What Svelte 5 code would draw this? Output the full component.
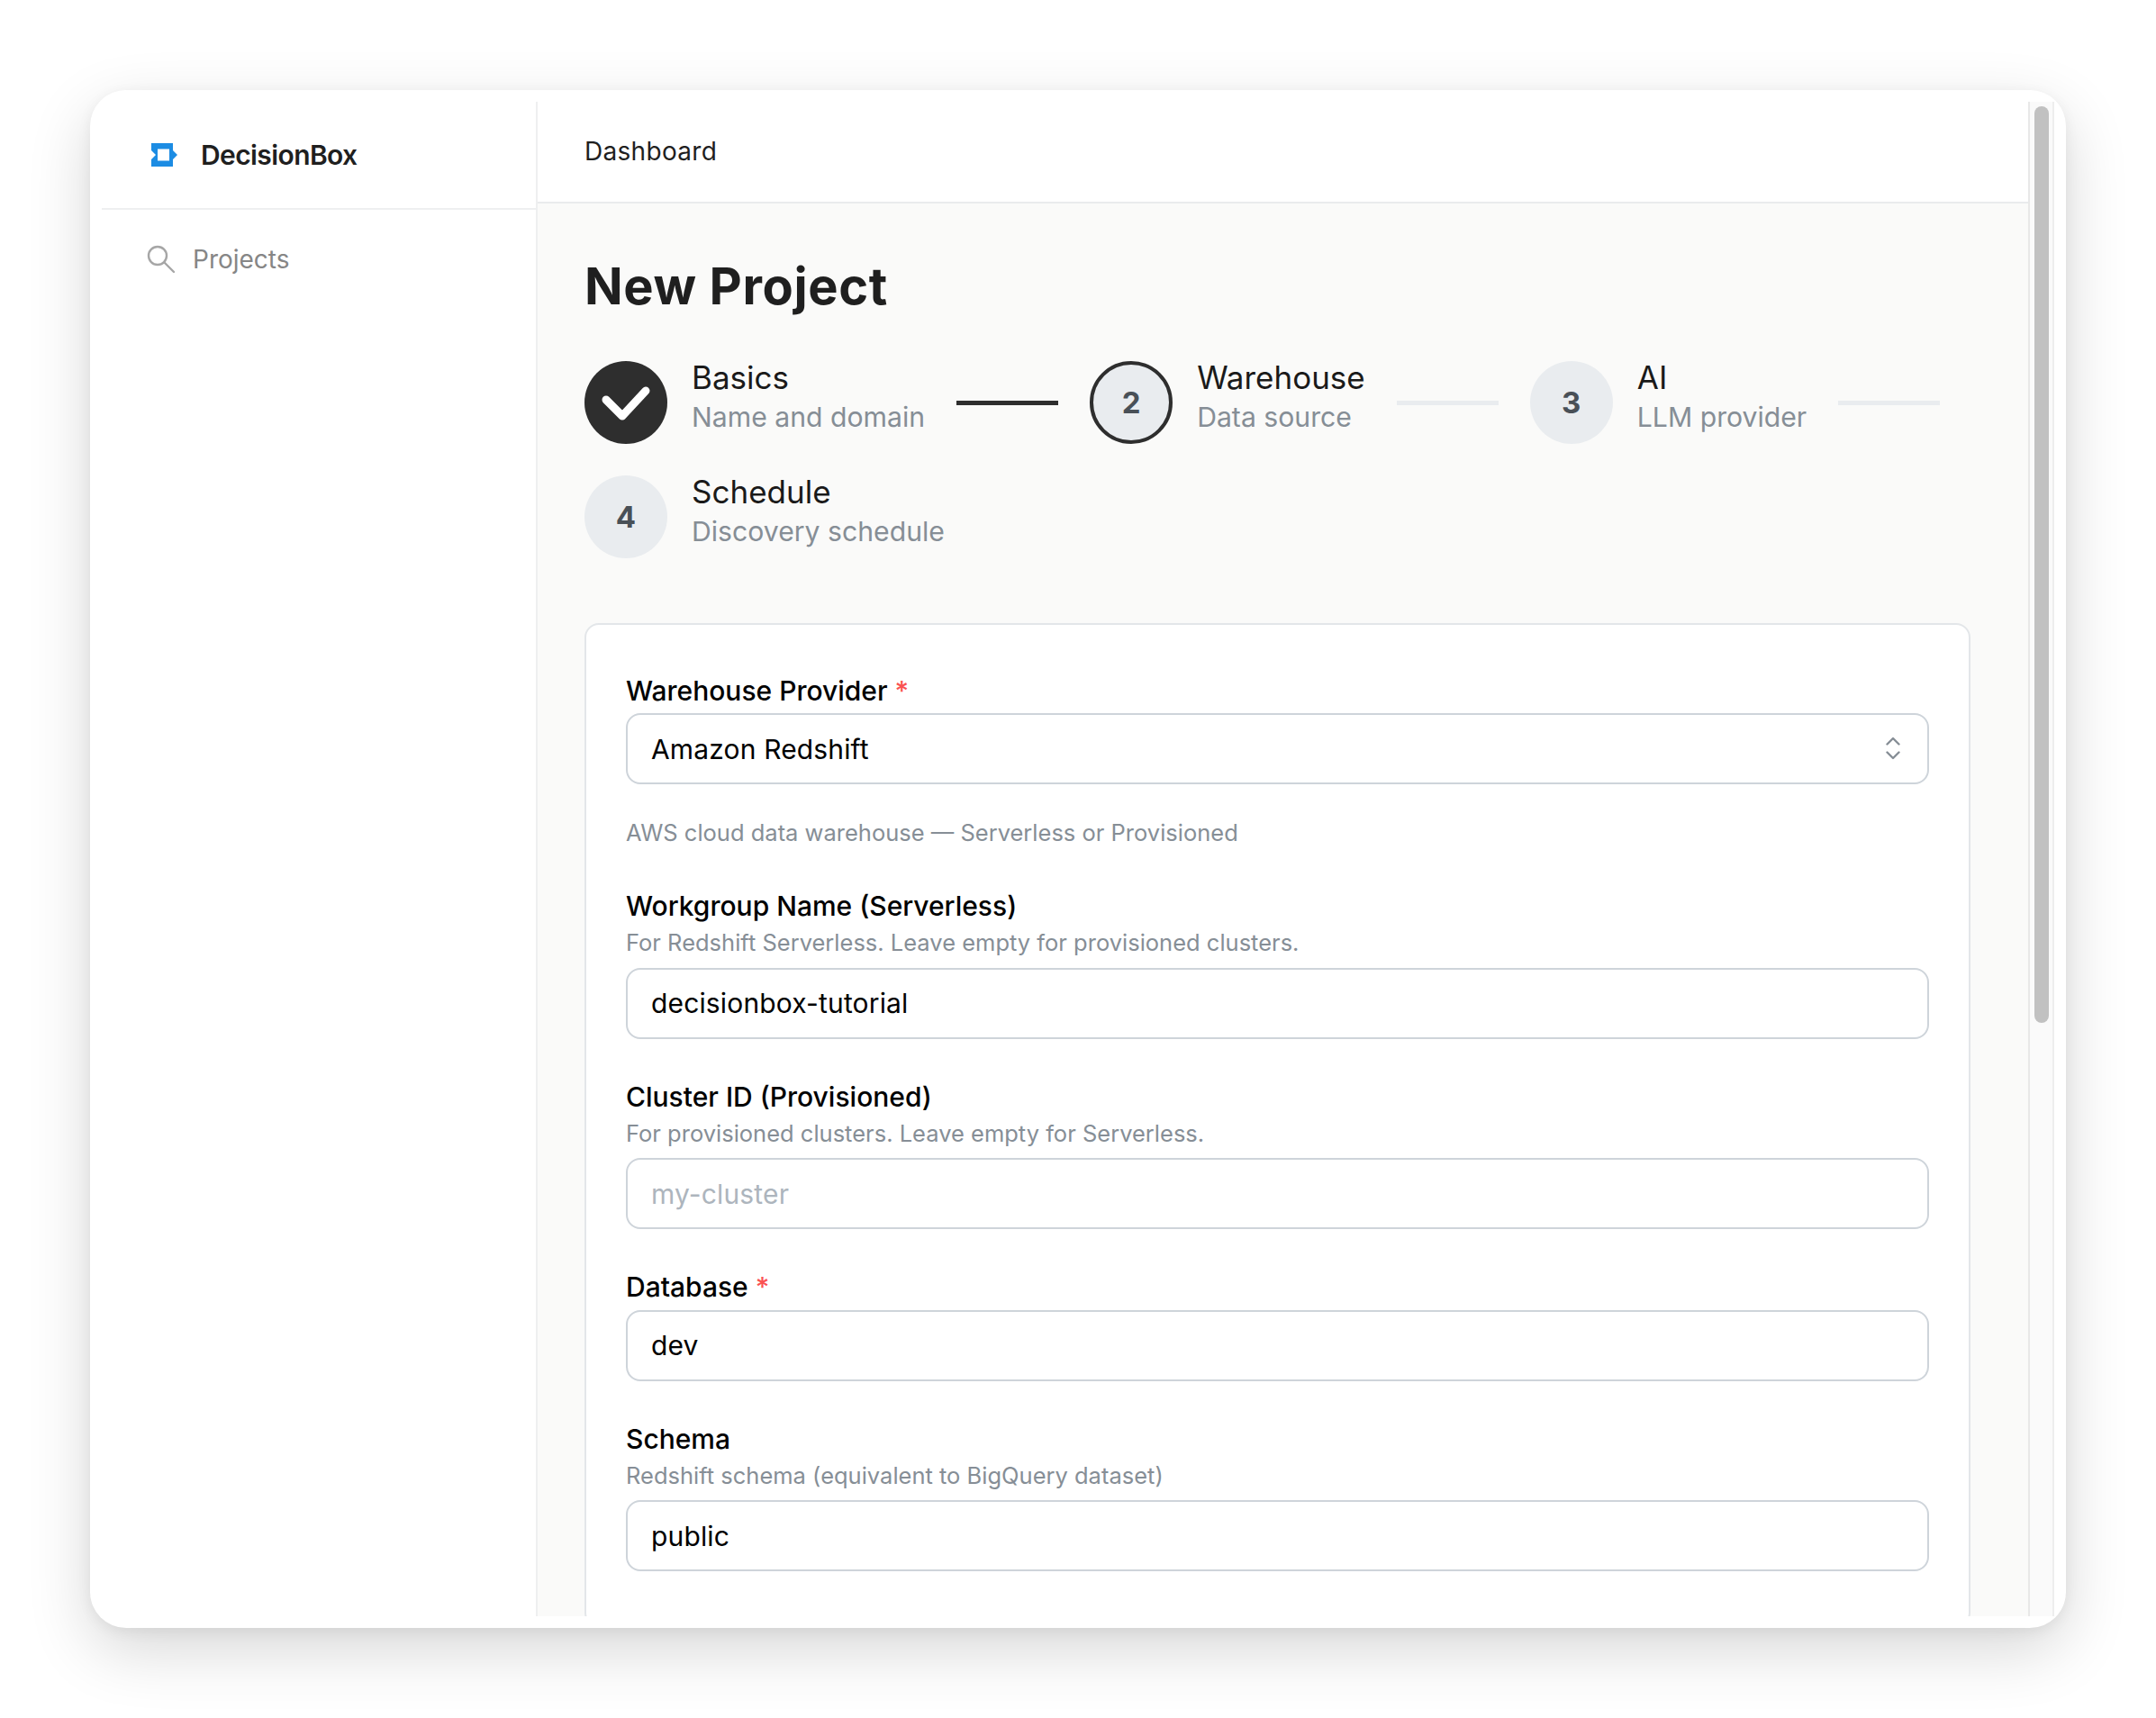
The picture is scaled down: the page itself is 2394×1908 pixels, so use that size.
<script lang="ts">
  type Step = { n: number; title: string; sub: string; state: "done" | "active" | "todo" };

  const steps: Step[] = [
    { n: 1, title: "Basics", sub: "Name and domain", state: "done" },
    { n: 2, title: "Warehouse", sub: "Data source", state: "active" },
    { n: 3, title: "AI", sub: "LLM provider", state: "todo" },
    { n: 4, title: "Schedule", sub: "Discovery schedule", state: "todo" },
  ];

  const fields = [
    {
      label: "Workgroup Name (Serverless)",
      hint: "For Redshift Serverless. Leave empty for provisioned clusters.",
      value: "decisionbox-tutorial",
    },
    {
      label: "Cluster ID (Provisioned)",
      hint: "For provisioned clusters. Leave empty for Serverless.",
      value: "",
      placeholder: "my-cluster",
    },
    { label: "Database", required: true, value: "dev" },
    {
      label: "Schema",
      hint: "Redshift schema (equivalent to BigQuery dataset)",
      value: "public",
    },
  ];
</script>

<div class="page">
  <div class="window">
    <aside class="sidebar">
      <div class="brand">
        <svg class="logo" viewBox="0 0 29 26" aria-hidden="true">
          <path
            fill="#1c8ce3"
            fill-rule="evenodd"
            d="M0 0H24V8L29 13L24 18V26H0V18L5 13L0 8ZM7 6.5V19.5H20V6.5Z"
          />
        </svg>
        <span>DecisionBox</span>
      </div>
      <nav class="nav">
        <svg class="search" viewBox="0 0 32 32" fill="none" stroke="#a6a6a6" stroke-width="2.4" stroke-linecap="round" aria-hidden="true">
          <circle cx="12" cy="12" r="10" />
          <path d="M19.5 19.5L30 30" />
        </svg>
        <span>Projects</span>
      </nav>
    </aside>

    <div class="main">
      <header class="topbar">Dashboard</header>
      <div class="content">
        <h1>New Project</h1>

        <div class="stepper">
          {#each steps as step, i}
            <div class="step">
              <div class="circle {step.state}">
                {#if step.state === "done"}
                  <svg viewBox="0 0 92 92" fill="none" stroke="#fff" stroke-width="9" stroke-linecap="round" stroke-linejoin="round" aria-hidden="true">
                    <path d="M24 43L42 61L68 33" />
                  </svg>
                {:else}
                  {step.n}
                {/if}
              </div>
              <div class="step-text">
                <div class="step-title">{step.title}</div>
                <div class="step-sub">{step.sub}</div>
              </div>
            </div>
            {#if i < steps.length - 1}
              <div class="connector" class:filled={step.state === "done"}></div>
            {/if}
          {/each}
        </div>

        <section class="card">
          <div class="field">
            <label for="provider">Warehouse Provider <span class="req">*</span></label>
            <div class="select">
              <input id="provider" value="Amazon Redshift" readonly />
              <svg class="chevrons" viewBox="0 0 16 26" fill="none" stroke="#868e96" stroke-width="2.4" stroke-linecap="round" stroke-linejoin="round" aria-hidden="true">
                <path d="M1.5 8.5L8 2L14.5 8.5" />
                <path d="M1.5 17.5L8 24L14.5 17.5" />
              </svg>
            </div>
            <p class="desc">AWS cloud data warehouse — Serverless or Provisioned</p>
          </div>

          {#each fields as field}
            <div class="field">
              <label for={field.label}>
                {field.label}
                {#if field.required}<span class="req">*</span>{/if}
              </label>
              {#if field.hint}
                <p class="hint">{field.hint}</p>
              {/if}
              <input id={field.label} value={field.value} placeholder={field.placeholder} readonly />
            </div>
          {/each}
        </section>
      </div>
    </div>

    <div class="scrollbar"><div class="thumb"></div></div>
  </div>
</div>

<style>
  :global(body) {
    background: #fff;
    font-family: Inter, "Liberation Sans", sans-serif;
    overflow: hidden;
  }

  .page {
    box-sizing: border-box;
    height: 1908px;
    overflow: hidden;
    padding: 100px;
  }

  .window {
    background: #fff;
    border-radius: 40px;
    box-shadow:
      0 24px 70px rgba(0, 0, 0, 0.16),
      0 4px 16px rgba(0, 0, 0, 0.06);
    box-sizing: border-box;
    display: flex;
    height: 1708px;
    overflow: hidden;
    padding: 13px;
    width: 2194px;
  }

  .sidebar {
    border-right: 2px solid #eeeff0;
    box-sizing: border-box;
    flex: none;
    width: 484px;
  }

  .brand {
    align-items: center;
    border-bottom: 2px solid #eeeff0;
    box-sizing: border-box;
    color: #1f1f1f;
    display: flex;
    font-size: 30px;
    font-weight: 600;
    gap: 26px;
    height: 120px;
    letter-spacing: -0.6px;
    padding: 0 0 0 55px;
  }

  .logo {
    height: 26px;
    width: 29px;
  }

  .nav {
    align-items: center;
    color: #868686;
    display: flex;
    font-size: 28px;
    gap: 19px;
    padding: 38px 0 0 50px;
  }

  .search {
    height: 32px;
    width: 32px;
  }

  .main {
    background: #fafaf9;
    display: flex;
    flex: 1;
    flex-direction: column;
    min-width: 0;
  }

  .topbar {
    align-items: center;
    background: #fff;
    border-bottom: 2px solid #e9ebed;
    box-sizing: border-box;
    color: #1f1f1f;
    display: flex;
    flex: none;
    font-size: 28px;
    height: 113px;
    letter-spacing: 0.3px;
    padding: 0 0 2px 52px;
  }

  .content {
    flex: 1;
    overflow: hidden;
    padding: 60px 64px 0 52px;
  }

  h1 {
    color: #1f1f1f;
    font-size: 56px;
    font-weight: 700;
    letter-spacing: 0.6px;
    line-height: 64px;
    margin: 0 0 51px;
  }

  .stepper {
    align-items: center;
    display: flex;
    flex-wrap: wrap;
    gap: 35px;
  }

  .step {
    align-items: center;
    display: flex;
    gap: 27px;
  }

  .circle {
    align-items: center;
    background: #e9ecef;
    border-radius: 50%;
    box-sizing: border-box;
    color: #495057;
    display: flex;
    flex: none;
    font-size: 33px;
    font-weight: 700;
    height: 92px;
    justify-content: center;
    width: 92px;
  }

  .circle.done {
    background: #2e2e2e;
  }

  .circle.done svg {
    display: block;
    height: 92px;
    width: 92px;
  }

  .circle.active {
    border: 4px solid #2e2e2e;
  }

  .step-text {
    margin: -6px 0 6px;
  }

  .step-title {
    color: #1a1a1a;
    font-size: 35px;
    line-height: 44px;
  }

  .step-sub {
    color: #868e96;
    font-size: 30.2px;
    line-height: 44px;
  }

  .connector {
    background: #e9ecef;
    height: 5px;
    width: 113px;
  }

  .connector.filled {
    background: #2e2e2e;
  }

  .card {
    background: #fff;
    border: 2px solid #e3e6e9;
    border-radius: 16px;
    margin-top: 72px;
    padding: 55.5px 44px 60px;
  }

  .field + .field {
    margin-top: 47px;
  }

  label {
    color: #000;
    display: block;
    font-size: 30px;
    font-weight: 500;
    line-height: 34px;
    margin-bottom: 8.5px;
  }

  .req {
    color: #fa5252;
  }

  .hint,
  .desc {
    color: #868e96;
    font-size: 25.5px;
    line-height: 34px;
    margin: 0;
  }

  .hint {
    margin: -1.5px 0 10.5px;
  }

  .desc {
    margin: 37px 0 1.5px;
  }

  input {
    background: #fff;
    border: 2px solid #ced4da;
    border-radius: 16px;
    box-sizing: border-box;
    color: #000;
    display: block;
    font: inherit;
    font-size: 30px;
    height: 79px;
    letter-spacing: 0.15px;
    outline: none;
    padding: 0 26px;
    width: 100%;
  }

  input::placeholder {
    color: #adb5bd;
  }

  .select {
    position: relative;
  }

  .chevrons {
    height: 26px;
    position: absolute;
    right: 32px;
    top: 26px;
    width: 16px;
  }

  .scrollbar {
    background: #fafafa;
    border-left: 2px solid #e8e8e8;
    border-right: 2px solid #eeeeee;
    box-sizing: border-box;
    flex: none;
    padding: 5px 4px 0 5px;
    width: 29px;
  }

  .thumb {
    background: #c1c1c1;
    border-radius: 8px;
    height: 1018px;
    width: 16px;
  }
</style>
